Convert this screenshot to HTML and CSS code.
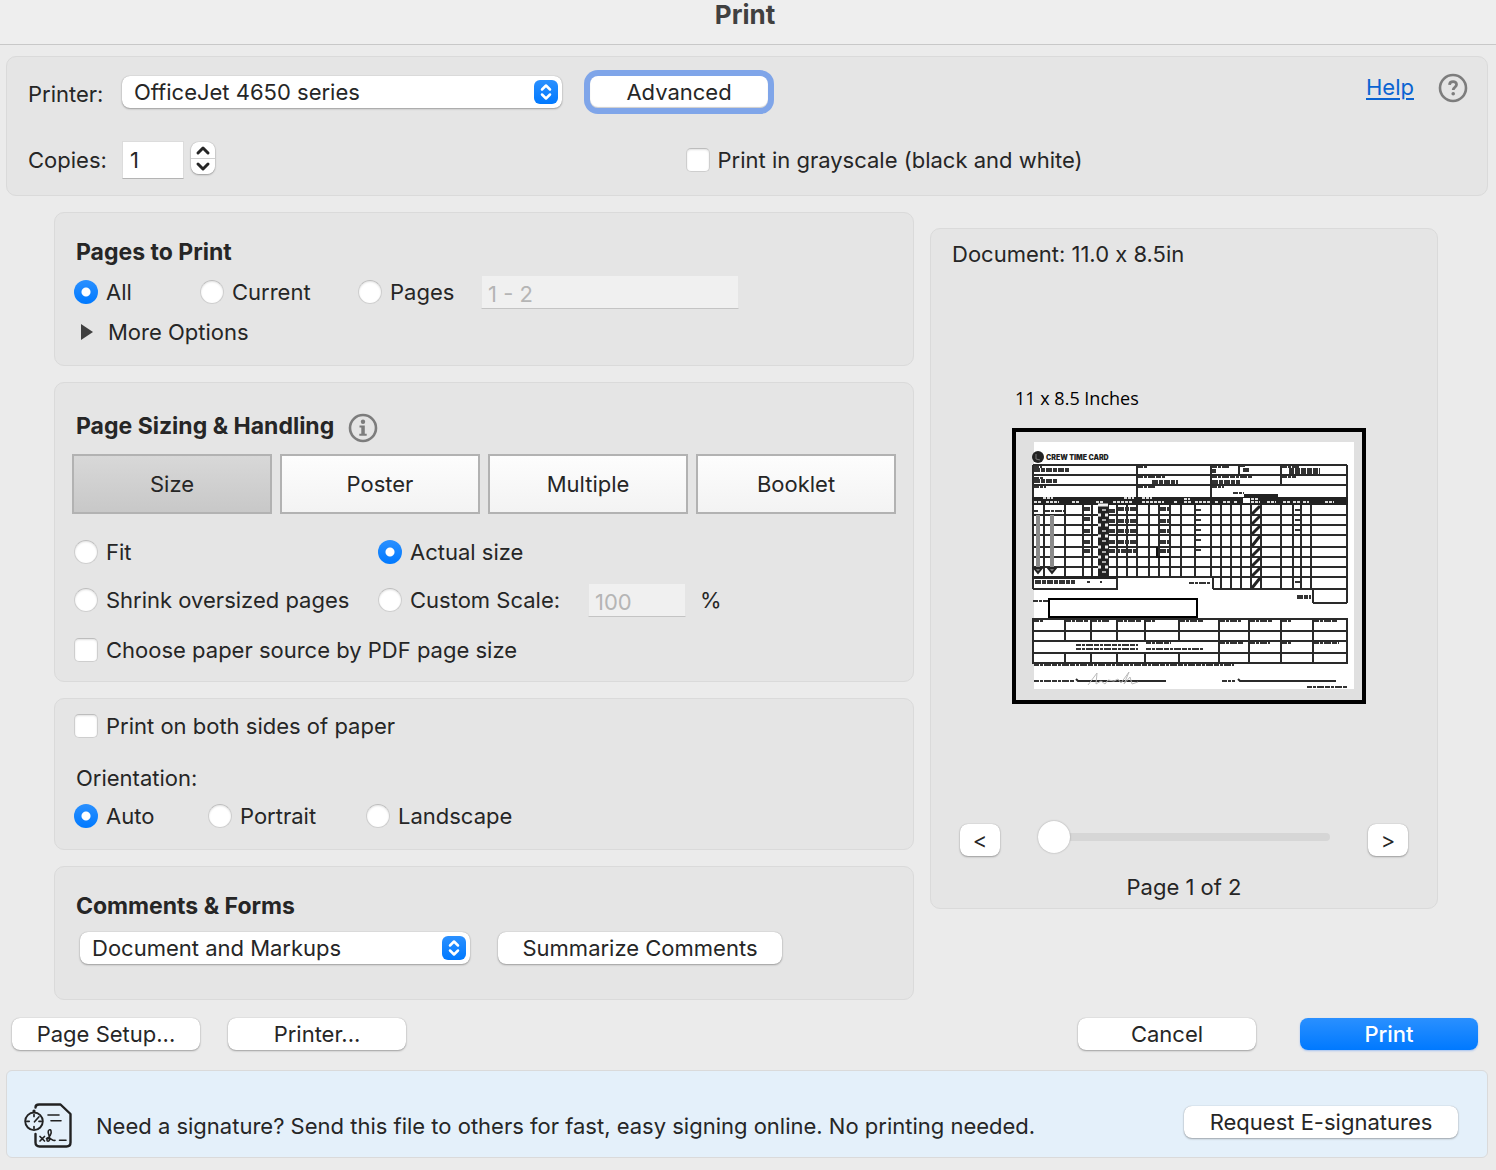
FILE: index.html
```html
<!DOCTYPE html>
<html lang="en">
<head>
<meta charset="utf-8">
<meta name="viewport" content="width=device-width, initial-scale=1">
<title>Print</title>
<link rel="stylesheet" href="styles.css">
</head>
<body>
<header class="titlebar"><h1>Print</h1></header>
<form class="dialog">
  <section class="panel printer-panel">
    <div class="printer-row">
      <label class="field-label" for="printer">Printer:</label>
      <span class="select-wrap printer-select">
        <select class="select" id="printer"><option>OfficeJet 4650 series</option></select>
        <svg class="select-badge" viewBox="0 0 24 24" aria-hidden="true"><path d="M8 9.500l4-4 4 4M8 14.500l4 4 4-4"/></svg>
      </span>
      <button class="button button-focus" type="button">Advanced</button>
      <div class="help">
        <a href="#help">Help</a>
        <svg class="round-icon" viewBox="0 0 30 30" aria-hidden="true"><circle cx="15" cy="15" r="13"/><path d="M11.500 11.800c.3-4.300 7.200-4.200 7 0-.1 2.400-3.300 2.500-3.300 5.200" stroke-width="2.800"/><circle class="solid" cx="15.200" cy="20.800" r="1.800"/></svg>
      </div>
    </div>
    <div class="copies-row">
      <div class="copies">
        <label class="field-label" for="copies">Copies:</label>
        <input class="text-input copies-input" id="copies" type="text" value="1">
        <span class="stepper">
          <button type="button" aria-label="More copies"><svg viewBox="0 0 24 16" aria-hidden="true"><path d="M7 11l5-5 5 5"/></svg></button>
          <button type="button" aria-label="Fewer copies"><svg viewBox="0 0 24 16" aria-hidden="true"><path d="M7 5l5 5 5-5"/></svg></button>
        </span>
      </div>
      <label class="choice"><input type="checkbox">Print in grayscale (black and white)</label>
    </div>
  </section>

  <main class="columns">
    <div class="settings">
      <section class="panel card pages-card">
        <h2>Pages to Print</h2>
        <div class="choices pages-choices">
          <label class="choice"><input type="radio" name="pages" checked>All</label>
          <label class="choice"><input type="radio" name="pages">Current</label>
          <label class="choice"><input type="radio" name="pages">Pages</label>
          <input class="text-input" type="text" value="1 - 2" aria-label="Page range" disabled>
        </div>
        <button class="disclosure" type="button"><svg viewBox="0 0 14 16" aria-hidden="true"><path d="M1 0l12 8-12 8z"/></svg>More Options</button>
      </section>

      <section class="panel card sizing-card">
        <h2>Page Sizing &amp; Handling
          <svg class="round-icon info" viewBox="0 0 30 30" aria-hidden="true"><circle cx="15" cy="15" r="13"/><circle class="solid" cx="15" cy="8.800" r="2.200"/><path class="solid" d="M11.500 12.500h5.300v8.200h1.900v2h-7.400v-2h2v-6.200h-1.800z"/></svg>
        </h2>
        <div class="tabs">
          <button class="tab tab-active" type="button">Size</button>
          <button class="tab" type="button">Poster</button>
          <button class="tab" type="button">Multiple</button>
          <button class="tab" type="button">Booklet</button>
        </div>
        <div class="choices scale-choices">
          <label class="choice"><input type="radio" name="scale">Fit</label>
          <label class="choice actual"><input type="radio" name="scale" checked>Actual size</label>
          <label class="choice"><input type="radio" name="scale">Shrink oversized pages</label>
          <label class="choice"><input type="radio" name="scale">Custom Scale:</label>
          <span class="percent"><input class="text-input" id="percent" type="text" value="100" disabled><label for="percent">%</label></span>
        </div>
        <label class="choice source"><input type="checkbox">Choose paper source by PDF page size</label>
      </section>

      <section class="panel card orientation-card">
        <label class="choice"><input type="checkbox">Print on both sides of paper</label>
        <p class="group-label">Orientation:</p>
        <div class="choices orientation-choices">
          <label class="choice"><input type="radio" name="orientation" checked>Auto</label>
          <label class="choice"><input type="radio" name="orientation">Portrait</label>
          <label class="choice"><input type="radio" name="orientation">Landscape</label>
        </div>
      </section>

      <section class="panel card comments-card">
        <h2>Comments &amp; Forms</h2>
        <div class="comments-row">
          <span class="select-wrap comments-select">
            <select class="select" aria-label="Comments and forms"><option>Document and Markups</option></select>
            <svg class="select-badge" viewBox="0 0 24 24" aria-hidden="true"><path d="M8 9.500l4-4 4 4M8 14.500l4 4 4-4"/></svg>
          </span>
          <button class="button summarize" type="button">Summarize Comments</button>
        </div>
      </section>
    </div>

    <section class="panel preview">
      <p class="document-size">Document: 11.0 x 8.5in</p>
      <figure>
        <figcaption>11 x 8.5 Inches</figcaption>
        <svg class="page" viewBox="0 0 354 276" role="img" aria-label="Crew time card">
          <rect x="2" y="2" width="350" height="272" fill="#e0e0e0" stroke="#000" stroke-width="4"/>
          <path fill="#fff" d="M22 14h320v247H22z"/>
          <circle cx="26" cy="29" r="6" fill="#222"/>
          <path d="M24 26v5l4 1" stroke="#777" fill="none"/>
          <text class="card-title" x="34" y="32">CREW TIME CARD</text>
          <!-- job details -->
          <path class="rule" d="M21 37h314M21 47h314M21 57h314M21 37v124M125 37v32M199 37v32M227 37v10M269 37v20M335 37v138"/>
          <path class="ink" d="M20 69h316v8H20z"/>
          <path class="scrawl" d="M22 39h8M22 50h9M22 59h12M126 39h10M126 49h27M126 59h17M200 39h17M228 38h6M270 39h17M200 49h40M270 49h14M200 59h12M221 65h11"/>
          <path class="scrawl heavy" d="M22 42h36M22 53h23M140 54h26M200 43h4M231 42h7M200 54h28"/>
          <path class="scrawl stamp" d="M277 43h31"/>
          <path class="ink" d="M232 66h34v3h-34z"/>
          <path class="knock" d="M22 74h8M34 74h13M60 74h7M84 74h8M101 74h20M130 74h22M162 74h4M172 74h8M183 74h15M203 74h4M211 74h7M222 74h4M239 74h9M255 74h9M271 74h7M281 74h7M291 74h6M313 74h9M31 70h10M112 70h10M130 70h10M172 71h6M239 71h7"/>
          <path fill="#fff" d="M231 70h7v5h-7z"/>
          <!-- hours grid -->
          <path class="rule" d="M21 87h314M21 97h314M21 107h314M21 119h314M21 129h314M21 139h314M21 149h314M201 161h134M301 175h34M301 161v14"/>
          <path class="rule" d="M32 77v72M53 77v72M71 77v72M80 77v72M96 77v72M105 77v72M115 77v72M125 77v72M137 77v72M147 77v72M158 77v72M169 77v72M183 77v72M199 77v72M201 149v12M209 77v84M219 77v84M229 77v84M239 77v84M249 77v84M269 77v84M281 77v84M289 77v84M299 77v84"/>
          <path class="ink" d="M86 77h10v72H86z"/>
          <path class="check" d="M86 77h10M86 87h3M93 87h3M86 97h3M93 97h3M86 108h3M93 108h3M86 119h3M93 119h3M86 129h3M93 129h3M86 139h3M93 139h3"/>
          <path class="fleck" d="M90 82h4M90 92h4M90 103h4M90 113h4M90 124h4M90 134h4M90 144h4"/>
          <path class="scrawl" d="M22 83h4M33 83h19M184 82h6M184 92h6M184 102h6M184 112h6M184 122h6M283 82h5M283 92h5M283 102h5M283 154h5"/>
          <path class="scrawl heavy" d="M72 81h7M97 83h7M106 81h18M148 81h9M72 91h7M97 93h7M106 93h18M148 93h9M72 103h7M97 103h7M106 103h18M148 103h9M72 114h7M97 114h7M106 114h18M148 114h9M72 123h7M97 123h27M148 123h9"/>
          <path d="M145 119v10h13" fill="none" stroke="#111" stroke-width="2"/>
          <path d="M240 86l8-8M240 96l8-8M240 106l8-8M240 118l8-10M240 128l8-8M240 138l8-8M240 148l8-8M240 160l8-10" stroke="#222" stroke-width="3"/>
          <path d="M26 87v52M40 87v52" stroke="#8a8a8a" stroke-width="4"/>
          <path d="M22 140h8l-4 5zM36 140h8l-4 5z" fill="#777" stroke="#222" stroke-width="2"/>
          <path class="ink" d="M20 148h86v3H20z"/>
          <path class="rule" d="M21 161h84v-12"/>
          <path class="scrawl" d="M75 154h3M88 154h2M177 155h21M21 173h16"/>
          <path class="scrawl heavy" d="M23 154h40M285 169h14"/>
          <path d="M37 171h148v18H37z" fill="#fff" stroke="#000" stroke-width="2"/>
          <!-- totals table -->
          <path class="rule" d="M21 191h314v44H21zM21 203h314M21 213h314M21 225h314M53 191v22M79 191v22M105 191v22M133 191v22M167 191v22M53 225v10M79 225v10M105 225v10M133 225v10M167 225v10M207 191v44M237 191v44M269 191v44M301 191v44"/>
          <path class="scrawl" d="M22 193h9M54 193h22M80 193h18M106 193h23M134 193h10M168 193h24M208 193h21M238 193h22M270 193h9M302 193h24M134 215h25M64 217h62M64 221h62M134 221h57M208 215h24M238 215h20M270 215h9M302 215h25M22 237h200"/>
          <path class="scrawl" d="M22 253h40M210 253h13M295 259h40"/>
          <path class="rule" d="M64 251l2 2h88M226 251l2 2h96"/>
          <path d="M76 257l9-12-1 11 5-3 4 3 3-4 6 1 4-2 3 4 8-11-5 12 6-7 2 7 6-2" fill="none" stroke="#bbb"/>
        </svg>
      </figure>
      <div class="pager">
        <button class="button pager-button" type="button" aria-label="Previous page">&lt;</button>
        <input class="slider" type="range" min="1" max="2" value="1" aria-label="Page">
        <button class="button pager-button" type="button" aria-label="Next page">&gt;</button>
      </div>
      <p class="page-count">Page 1 of 2</p>
    </section>
  </main>

  <footer class="actions">
    <button class="button setup" type="button">Page Setup...</button>
    <button class="button action" type="button">Printer...</button>
    <button class="button action cancel" type="button">Cancel</button>
    <button class="button action primary" type="submit">Print</button>
  </footer>

  <aside class="panel banner">
    <svg class="sign-icon" viewBox="0 0 50 48" aria-hidden="true">
      <path d="M12.500 6.500c0-2 1.500-3 3.500-3h21.500l10 9.500v28.500c0 2.500-1.500 4-4 4h-27c-2.500 0-4-1.500-4-4V33" stroke-width="2.400"/>
      <path d="M25 14h11M28 19.800h10M36.500 39.300h6.500" stroke-width="1.600"/>
      <circle cx="11" cy="20.300" r="8.800" stroke-width="1.900"/>
      <path d="M11 13.500v2M11 25.500v2M3.800 20.300h2.400M16 20.300h2.200M11.500 20.800l4.500-5" stroke-width="1.700"/>
      <circle cx="11" cy="10" r="1.600" fill="#222" stroke="none"/>
      <path d="M17 35.500l4.500 4.500M21.500 35.500l-4.500 4.500" stroke-width="1.700"/>
      <path d="M23.500 37.500c3-1 5.500-5 4.500-7.700-.8-2-3-1-2.800 1.500.2 3 2.300 4.700 1.300 7.700-.6 1.700-2.700 1.500-2.600-.2.100-1.500 2.500-1.800 4-.8 1.300.8 2.600 2 4.100 1.300" stroke-width="1.600"/>
    </svg>
    <p>Need a signature? Send this file to others for fast, easy signing online. No printing needed.</p>
    <button class="button request" type="button">Request E-signatures</button>
  </aside>
</form>
</body>
</html>
```
FILE: styles.css
```css
* { box-sizing: border-box; }

body {
  margin: 0;
  min-height: 100vh;
  background: #ebebeb;
  color: #262626;
  font: 22px/28px Inter, "Liberation Sans", sans-serif;
}

h1, h2, p, figure { margin: 0; }
svg { display: block; }
button, input, select { font: inherit; color: inherit; }

.titlebar {
  height: 45px;
  border-bottom: 1px solid #c8c8c8;
  background: #eeeeee;
  text-align: center;
}
.titlebar h1 {
  padding-top: 1px;
  padding-right: 6px;
  color: #404040;
  font-size: 26px;
  line-height: 28px;
  font-weight: 700;
}

.dialog { padding: 11px 8px 12px 6px; }

.panel {
  border: 1px solid #dadada;
  border-radius: 10px;
  background: #e5e5e5;
}

/* Controls */
.button {
  height: 32px;
  padding: 0 10px;
  border: 0;
  border-radius: 8px;
  background: #fff;
  box-shadow: 0 0 1px rgba(0, 0, 0, .3), 0 1px 2px rgba(0, 0, 0, .3);
  line-height: 32px;
  white-space: nowrap;
}
.button-focus {
  width: 178px;
  margin-left: 28px;
  box-shadow: 0 0 0 6px #7fa5e9, inset 0 -1px 1px rgba(0, 0, 0, .2);
}
.primary {
  background: linear-gradient(#2a90ff, #0079ff);
  box-shadow: 0 1px 2px rgba(0, 100, 255, .3);
  color: #fff;
  font-weight: 500;
}

.select-wrap { position: relative; }
.select {
  appearance: none;
  width: 100%;
  height: 32px;
  padding: 0 40px 0 12px;
  border: 0;
  border-radius: 8px;
  background: #fff;
  box-shadow: 0 0 1px rgba(0, 0, 0, .3), 0 1px 2px rgba(0, 0, 0, .3);
}
.select-badge {
  position: absolute;
  top: 4px;
  right: 4px;
  width: 24px;
  height: 24px;
  border-radius: 6px;
  background: linear-gradient(#2a90ff, #0079ff);
  fill: none;
  stroke: #fff;
  stroke-width: 2.5;
  stroke-linecap: round;
  stroke-linejoin: round;
  pointer-events: none;
}

.choice {
  display: flex;
  align-items: center;
  gap: 8px;
  white-space: nowrap;
}
.choice input {
  appearance: none;
  flex: none;
  width: 24px;
  height: 24px;
  margin: 0;
  border: 1px solid #cecece;
  border-top-color: #bdbdbd;
  border-radius: 5px;
  background: #fff;
  box-shadow: inset 0 1px 2px rgba(0, 0, 0, .12);
}
.choice input[type="radio"] { border-radius: 50%; }
.choice input[type="radio"]:checked {
  border: 0;
  background: radial-gradient(circle, #fff 4px, transparent 5px), linear-gradient(#2a90ff, #0079ff);
  box-shadow: none;
}

.text-input {
  width: 100%;
  height: 34px;
  padding: 4px 6px 0;
  border: 1px solid #dcdcdc;
  border-bottom-color: #b4b4b4;
  background: #fff;
}
.text-input:disabled {
  border-color: #e5e5e5;
  border-bottom-color: #c4c4c4;
  background: #f0f0f0;
  color: #b5b5b5;
}

.round-icon {
  width: 30px;
  height: 30px;
  fill: none;
  stroke: #7d7d7d;
  stroke-width: 2.6;
}
.round-icon .solid { fill: #7d7d7d; stroke: none; }
.info { margin-top: 4px; }

/* Printer */
.printer-panel { padding: 12px 19px 15px 21px; }
.printer-row { display: flex; align-items: center; height: 46px; }
.field-label { flex: none; width: 94px; }
.printer-row .field-label { padding-top: 4px; }
.printer-select { width: 440px; }
.help {
  display: flex;
  align-items: center;
  gap: 24px;
  margin-left: auto;
  padding-bottom: 8px;
}
.help a { padding-bottom: 3px; color: #0a64d2; text-underline-offset: 3px; }

.copies-row {
  display: grid;
  grid-template-columns: 658fr 783fr;
  margin-top: 25px;
}
.copies { display: flex; align-items: center; height: 40px; }
.copies-input { width: 62px; height: 38px; padding: 0 7px; }
.stepper {
  display: flex;
  flex-direction: column;
  width: 24px;
  margin: 0 0 4px 7px;
  border-radius: 8px;
  box-shadow: 0 0 1px rgba(0, 0, 0, .4), 0 1px 2px rgba(0, 0, 0, .3);
  overflow: hidden;
}
.stepper button { height: 16px; padding: 0; border: 0; background: #fff; }
.stepper button + button { border-top: 1px solid #d0d0d0; }
.stepper svg {
  width: 24px;
  height: 16px;
  fill: none;
  stroke: #262626;
  stroke-width: 3;
  stroke-linecap: round;
  stroke-linejoin: round;
}

/* Settings */
.columns {
  display: grid;
  grid-template-columns: 860fr 508fr;
  align-items: start;
  gap: 16px;
  padding: 16px 50px 0 48px;
}
.settings { display: grid; gap: 16px; }
.card { padding: 19px 17px 13px; }
.card h2 {
  display: flex;
  align-items: center;
  gap: 14px;
  height: 40px;
  padding-left: 4px;
  font-size: 23px;
  line-height: 28px;
  font-weight: 700;
}
.choices { display: grid; align-items: center; padding-left: 2px; }

.pages-choices { grid-template-columns: 126px 158px 123px 258px; height: 40px; }
.disclosure {
  display: flex;
  align-items: center;
  gap: 14px;
  height: 40px;
  padding: 0 0 0 8px;
  border: 0;
  background: none;
}
.disclosure svg { width: 14px; height: 16px; fill: #404040; }

.sizing-card { padding-top: 23px; padding-bottom: 5px; }
.tabs {
  display: grid;
  grid-template-columns: repeat(4, 1fr);
  gap: 8px;
  margin: 8px 0 14px;
}
.tab {
  height: 60px;
  border: 2px solid #b2b2b2;
  background: linear-gradient(#fdfdfd, #f3f3f3);
}
.tab-active { background: linear-gradient(#d8d8d8, #c8c8c8); }
.scale-choices { grid-template-columns: 304px 210px 1fr; grid-auto-rows: 48px; }
.actual { grid-column: 2 / 4; }
.percent { display: flex; align-items: center; gap: 14px; }
.percent .text-input { width: 98px; }
.source { height: 52px; padding-left: 2px; }

.orientation-card { padding-top: 7px; padding-bottom: 15px; }
.orientation-card > .choice { height: 40px; padding-left: 2px; }
.group-label { margin-top: 13px; padding-left: 4px; line-height: 38px; }
.orientation-choices { grid-template-columns: 134px 158px 1fr; height: 37px; }

.comments-card { padding-bottom: 35px; }
.comments-row {
  display: flex;
  align-items: center;
  gap: 28px;
  margin-top: 6px;
  padding-left: 8px;
}
.comments-select { width: 390px; }
.summarize { width: 284px; }

/* Preview */
.preview { margin-top: 16px; padding-bottom: 7px; }
.document-size { padding: 11px 21px 0; }
.preview figure { padding: 116px 71px 0 81px; }
.preview figcaption {
  margin-bottom: 16px;
  padding-left: 3px;
  color: #000;
  font: 18px/28px "Open Sans", "Noto Sans", sans-serif;
}
.page { width: 100%; }
.rule { fill: none; stroke: #2a2a2a; stroke-width: 2; }
.ink { fill: #222; }
.knock { stroke: #ddd; stroke-width: 2; stroke-dasharray: 3 1; }
.check { stroke: #eee; stroke-width: 3; }
.fleck { stroke: #aaa; stroke-width: 2; }
.scrawl { fill: none; stroke: #333; stroke-width: 2; stroke-dasharray: 5 1 3 1 7 1; }
.heavy { stroke-width: 4; stroke-dasharray: 6 1 4 1; }
.stamp { stroke-width: 6; stroke-dasharray: 5 1; }
.card-title { fill: #222; font: 900 7px Inter, sans-serif; }

.pager {
  display: flex;
  justify-content: space-between;
  align-items: center;
  gap: 38px;
  margin-top: 117px;
  padding: 0 29px;
}
.pager-button { flex: none; width: 40px; padding: 0; }
.slider {
  appearance: none;
  flex: 1;
  min-width: 0;
  height: 32px;
  margin: 0 0 6px;
  background: none;
}
.slider::-webkit-slider-runnable-track {
  height: 8px;
  border-radius: 4px;
  background: #d6d6d6;
}
.slider::-webkit-slider-thumb {
  appearance: none;
  width: 32px;
  height: 32px;
  margin-top: -12px;
  border-radius: 50%;
  background: #fff;
  box-shadow: 0 0 2px rgba(0, 0, 0, .3);
}
.page-count { margin-top: 14px; text-align: center; }

/* Footer */
.actions { display: flex; gap: 28px; padding: 18px 10px 20px 6px; }
.setup { width: 188px; }
.action { width: 178px; }
.cancel { margin-left: auto; margin-right: 16px; }

.banner {
  display: flex;
  align-items: center;
  height: 88px;
  padding: 16px 29px 0 16px;
  border-radius: 6px;
  background: #e4f0fa;
}
.sign-icon {
  flex: none;
  width: 50px;
  height: 48px;
  margin: 6px 23px 0 0;
  fill: none;
  stroke: #222;
  stroke-linecap: round;
  stroke-linejoin: round;
}
.banner p { padding-top: 8px; white-space: nowrap; }
.request { width: 274px; margin-left: auto; }
```
